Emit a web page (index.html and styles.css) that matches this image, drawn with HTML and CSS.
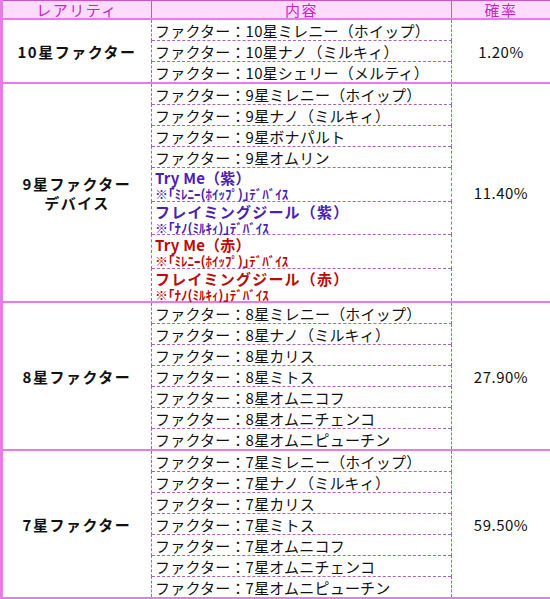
FILE: index.html
```html
<!DOCTYPE html>
<html lang="ja">
<head>
<meta charset="utf-8">
<title>レアリティ</title>
<link rel="stylesheet" href="styles.css">
</head>
<body>
<table class="rates">
<colgroup><col class="c1"><col class="c2"><col class="c3"></colgroup>
<thead>
<tr><th>レアリティ</th><th>内容</th><th>確率</th></tr>
</thead>
<tbody>
<tr><td class="label" rowspan="3">10星ファクター</td><td class="item">ファクター：10星ミレニー（ホイップ）</td><td class="rate" rowspan="3">1.20%</td></tr>
<tr><td class="item">ファクター：10星ナノ（ミルキィ）</td></tr>
<tr><td class="item">ファクター：10星シェリー（メルティ）</td></tr>
</tbody>
<tbody>
<tr><td class="label" rowspan="8">9星ファクター<br>デバイス</td><td class="item">ファクター：9星ミレニー（ホイップ）</td><td class="rate" rowspan="8">11.40%</td></tr>
<tr><td class="item">ファクター：9星ナノ（ミルキィ）</td></tr>
<tr><td class="item">ファクター：9星ボナパルト</td></tr>
<tr><td class="item">ファクター：9星オムリン</td></tr>
<tr class="dev"><td class="item purple"><div class="name">Try Me（紫）</div><div class="note">※｢ﾐﾚﾆｰ(ﾎｲｯﾌﾟ)｣ﾃﾞﾊﾞｲｽ</div></td></tr>
<tr class="dev"><td class="item purple"><div class="name wide">フレイミングジール（紫）</div><div class="note">※｢ﾅﾉ(ﾐﾙｷｨ)｣ﾃﾞﾊﾞｲｽ</div></td></tr>
<tr class="dev"><td class="item red"><div class="name">Try Me（赤）</div><div class="note">※｢ﾐﾚﾆｰ(ﾎｲｯﾌﾟ)｣ﾃﾞﾊﾞｲｽ</div></td></tr>
<tr class="dev"><td class="item red"><div class="name wide">フレイミングジール（赤）</div><div class="note">※｢ﾅﾉ(ﾐﾙｷｨ)｣ﾃﾞﾊﾞｲｽ</div></td></tr>
</tbody>
<tbody>
<tr><td class="label" rowspan="7">8星ファクター</td><td class="item">ファクター：8星ミレニー（ホイップ）</td><td class="rate" rowspan="7">27.90%</td></tr>
<tr><td class="item">ファクター：8星ナノ（ミルキィ）</td></tr>
<tr><td class="item">ファクター：8星カリス</td></tr>
<tr><td class="item">ファクター：8星ミトス</td></tr>
<tr><td class="item">ファクター：8星オムニコフ</td></tr>
<tr><td class="item">ファクター：8星オムニチェンコ</td></tr>
<tr><td class="item">ファクター：8星オムニピューチン</td></tr>
</tbody>
<tbody>
<tr><td class="label" rowspan="7">7星ファクター</td><td class="item">ファクター：7星ミレニー（ホイップ）</td><td class="rate" rowspan="7">59.50%</td></tr>
<tr><td class="item">ファクター：7星ナノ（ミルキィ）</td></tr>
<tr><td class="item">ファクター：7星カリス</td></tr>
<tr><td class="item">ファクター：7星ミトス</td></tr>
<tr><td class="item">ファクター：7星オムニコフ</td></tr>
<tr><td class="item">ファクター：7星オムニチェンコ</td></tr>
<tr><td class="item">ファクター：7星オムニピューチン</td></tr>
</tbody>
</table>
</body>
</html>
```
FILE: styles.css
```css
body {
  margin: 0;
  background: #ffffff;
  font-family: "Noto Sans CJK JP", sans-serif;
  color: #111111;
}
.rates {
  border-collapse: collapse;
  table-layout: fixed;
  width: 550px;
  border: 3px solid #e77be7;
  border-top-width: 1px;
}
.c1 { width: 150px; }
.c2 { width: 300px; }
.c3 { width: 100px; }
.rates th {
  background: #ffdcff;
  color: #cc22cc;
  font-weight: normal;
  font-size: 15px;
  line-height: 17px;
  height: 16px;
  padding: 0;
  letter-spacing: 1.5px;
  border: 1px solid #c955c9;
  border-bottom: 2px solid #e77be7;
}
.rates tbody {
  border-top: 2px solid #e77be7;
}
.rates td {
  border: 1px dashed #a865b5;
  padding: 0 3px;
  font-size: 15px;
  line-height: 19px;
  height: 20px;
}
.label {
  text-align: center;
  font-weight: bold;
  letter-spacing: 1.5px;
}
.rate {
  text-align: center;
  letter-spacing: 0.5px;
}
.item {
  white-space: nowrap;
  letter-spacing: 0.2px;
}
.rates .dev .item {
  height: 32.5px;
  font-weight: bold;
}
.name {
  font-size: 15px;
  line-height: 19px;
}
.name.wide {
  letter-spacing: 1.2px;
}
.note {
  font-size: 13px;
  line-height: 13px;
  letter-spacing: 0;
}
.purple { color: #4a22b3; }
.red { color: #bb0a0a; }
```
